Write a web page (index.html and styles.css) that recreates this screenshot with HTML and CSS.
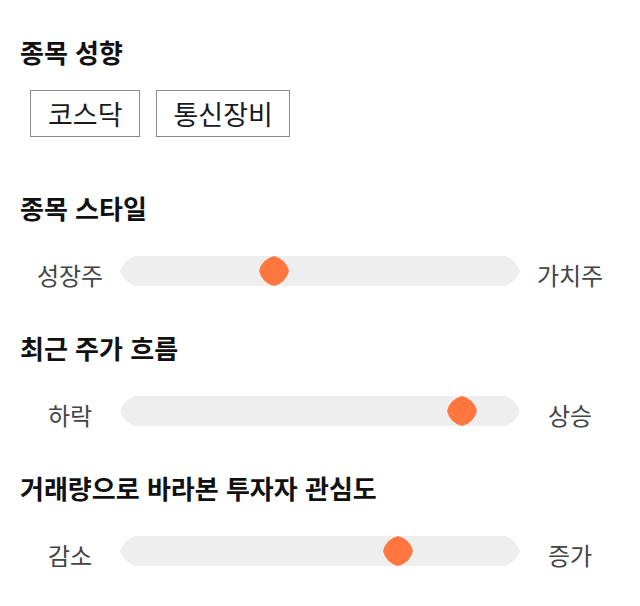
FILE: index.html
```html
<!DOCTYPE html>
<html lang="ko">
<head>
<meta charset="utf-8">
<link rel="stylesheet" href="styles.css">
</head>
<body>
<main class="page">
  <section class="group group-tags">
    <h2 class="title">종목 성향</h2>
    <div class="chips">
      <span class="chip">코스닥</span>
      <span class="chip">통신장비</span>
    </div>
  </section>

  <section class="group">
    <h2 class="title">종목 스타일</h2>
    <div class="slider-row">
      <span class="side">성장주</span>
      <svg class="track" width="400" height="30" viewBox="0 0 400 30">
        <path class="rail" d="M15 0 H385 A24 24 0 0 1 400 15 A24 24 0 0 1 385 30 H15 A24 24 0 0 1 0 15 A24 24 0 0 1 15 0 Z"/>
        <path class="thumb" transform="translate(139 0)" d="M15 0 A20 20 0 0 1 30 15 A20 20 0 0 1 15 30 A20 20 0 0 1 0 15 A20 20 0 0 1 15 0 Z"/>
      </svg>
      <span class="side">가치주</span>
    </div>
  </section>

  <section class="group">
    <h2 class="title">최근 주가 흐름</h2>
    <div class="slider-row">
      <span class="side">하락</span>
      <svg class="track" width="400" height="30" viewBox="0 0 400 30">
        <path class="rail" d="M15 0 H385 A24 24 0 0 1 400 15 A24 24 0 0 1 385 30 H15 A24 24 0 0 1 0 15 A24 24 0 0 1 15 0 Z"/>
        <path class="thumb" transform="translate(327 0)" d="M15 0 A20 20 0 0 1 30 15 A20 20 0 0 1 15 30 A20 20 0 0 1 0 15 A20 20 0 0 1 15 0 Z"/>
      </svg>
      <span class="side">상승</span>
    </div>
  </section>

  <section class="group">
    <h2 class="title">거래량으로 바라본 투자자 관심도</h2>
    <div class="slider-row">
      <span class="side">감소</span>
      <svg class="track" width="400" height="30" viewBox="0 0 400 30">
        <path class="rail" d="M15 0 H385 A24 24 0 0 1 400 15 A24 24 0 0 1 385 30 H15 A24 24 0 0 1 0 15 A24 24 0 0 1 15 0 Z"/>
        <path class="thumb" transform="translate(263 0)" d="M15 0 A20 20 0 0 1 30 15 A20 20 0 0 1 15 30 A20 20 0 0 1 0 15 A20 20 0 0 1 15 0 Z"/>
      </svg>
      <span class="side">증가</span>
    </div>
  </section>
</main>
</body>
</html>
```

FILE: styles.css
```css
* { box-sizing: border-box; }

html, body {
  margin: 0;
  padding: 0;
  background: #ffffff;
}

body {
  font-family: "Noto Sans CJK KR", "Noto Sans", sans-serif;
  color: #111111;
  min-height: 606px;
}

.page {
  padding: 37px 20px 40px 20px;
  display: flex;
  flex-direction: column;
  gap: 47px;
}

.group-tags {
  margin-bottom: 9px;
}

.title {
  margin: 0;
  font-size: 26px;
  line-height: 30px;
  font-weight: 700;
  color: #111111;
}

.chips {
  display: flex;
  gap: 16px;
  margin: 23px 0 0 10px;
}

.chip {
  display: inline-block;
  height: 47px;
  padding: 0 16px 0 17px;
  border: 1px solid #8a8a8a;
  font-size: 27px;
  line-height: 45px;
  color: #1a1a1a;
}

.slider-row {
  display: grid;
  grid-template-columns: 100px 400px 100px;
  align-items: center;
  margin-top: 33px;
}

.side {
  text-align: center;
  font-size: 24px;
  line-height: 30px;
  color: #444444;
  transform: translateY(4px);
}

.track {
  display: block;
}

.rail { fill: #eeeeee; }
.thumb { fill: #ff773f; }
```
